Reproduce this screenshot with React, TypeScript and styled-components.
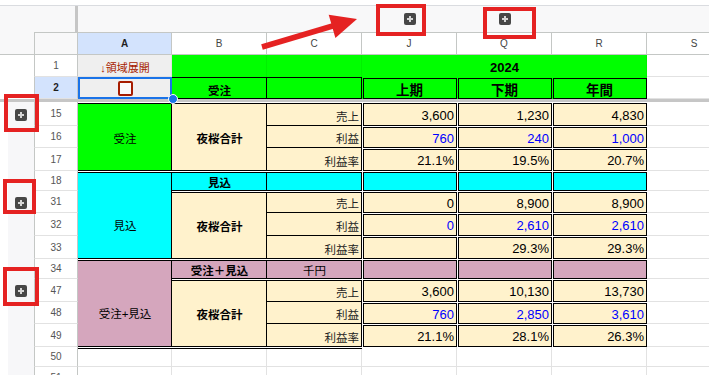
import React from "react";
import styled, { createGlobalStyle } from "styled-components";

const GREEN = "#00ff00";
const CYAN = "#00ffff";
const CREAM = "#fff2cc";
const MAUVE = "#d5a6bd";
const GRID = "#e2e2e2";
const HEAD_LINE = "#c4c7c5";
const RED = "#e52222";
const FONT = `"Liberation Sans", "Noto Sans CJK JP", sans-serif`;
const COLS = "34px 44px 94px 95px 95px 95px 95px 95px 95px";

const GlobalStyle = createGlobalStyle`
  *, *::before, *::after { box-sizing: border-box; }
  html, body { margin: 0; padding: 0; overflow: hidden; background: #fff; }
  body { font-family: ${FONT}; }
`;

type Top = "gap" | "line" | "none";

// black cell rules: right + bottom, optionally a top rule (double look with "gap")
const frame = (top: Top = "none", bottom = true) => {
  const s: string[] = [];
  if (top === "gap") s.push("inset 0 1px 0 #fff", "inset 0 2px 0 #000");
  if (top === "line") s.push("inset 0 1px 0 #000");
  s.push(bottom ? "inset -1px -1px 0 #000" : "inset -1px 0 0 #000");
  return s.join(", ");
};

const Page = styled.div`
  position: relative;
  width: 709px;
  height: 375px;
  overflow: hidden;
  padding-top: 5px;
  background: #fff;
`;

const ColumnGroups = styled.div`
  display: grid;
  grid-template-columns: ${COLS};
  height: 27px;
  border-top: 1px solid #dadce0;
  background: #f8f8f9;
`;

const GroupSlot = styled.div<{ $freeze?: boolean }>`
  display: flex;
  align-items: center;
  justify-content: center;
  ${(p) => p.$freeze && "border-right: 3px solid #c6c6c6;"}
`;

const GroupButton = styled.span`
  position: relative;
  display: block;
  width: 12px;
  height: 12px;
  border-radius: 2px;
  background: #474747;

  &::before,
  &::after {
    content: "";
    position: absolute;
    background: #d6d6d6;
  }
  &::before {
    left: 3px;
    top: 5px;
    width: 6px;
    height: 2px;
  }
  &::after {
    left: 5px;
    top: 3px;
    width: 2px;
    height: 6px;
  }
`;

const Sheet = styled.div`
  display: grid;
  grid-template-columns: ${COLS};
  grid-template-rows: 23px 22px 22px 3px 24px 22px 23px 20px 22px 23px 23px 20px 23px 22px 23px 20px 21px;
  font-family: ${FONT};
  color: #000;
`;

const Gutter = styled.div<{ $tone: "bar" | "plain" | "rail" }>`
  display: flex;
  align-items: center;
  justify-content: flex-end;
  padding: 1px 7px 0 0;
  background: ${(p) =>
    p.$tone === "bar"
      ? "#f8f8f9"
      : p.$tone === "rail"
      ? "linear-gradient(90deg, #fff 8px, #f7f7f9 8px)"
      : "#fff"};
  ${(p) => p.$tone === "bar" && `border-bottom: 1px solid ${HEAD_LINE};`}
`;

const Corner = styled.div`
  background: #f8f8f9;
  border: 1px solid ${HEAD_LINE};
`;

const ColHeader = styled.div<{ $active?: boolean }>`
  display: flex;
  align-items: center;
  justify-content: center;
  border-top: 1px solid ${HEAD_LINE};
  border-right: 1px solid ${HEAD_LINE};
  border-bottom: 1px solid ${HEAD_LINE};
  background: ${(p) => (p.$active ? "#d3e3fd" : "#fff")};
  color: ${(p) => (p.$active ? "#1f1f1f" : "#444")};
  font-weight: ${(p) => (p.$active ? 700 : 400)};
  font-size: 10px;
`;

const RowNum = styled.div<{ $active?: boolean }>`
  display: flex;
  align-items: center;
  justify-content: center;
  border-left: 1px solid ${HEAD_LINE};
  border-right: 1px solid ${HEAD_LINE};
  border-bottom: 1px solid ${GRID};
  background: ${(p) => (p.$active ? "#d3e3fd" : "#fff")};
  color: ${(p) => (p.$active ? "#1f1f1f" : "#555")};
  font-weight: ${(p) => (p.$active ? 700 : 400)};
  font-size: 10px;
`;

const ToggleLabel = styled.div`
  display: flex;
  align-items: center;
  justify-content: center;
  padding-top: 2px;
  background: #efefef;
  box-shadow: inset -1px -1px 0 ${GRID};
  color: #a61c00;
  font-size: 11px;
`;

const ToggleCell = styled.div`
  position: relative;
  z-index: 3;
  display: flex;
  align-items: center;
  justify-content: center;
  background: #efefef;
  box-shadow: inset 0 0 0 2px #1a73e8;
`;

const Checkbox = styled.span`
  width: 15px;
  height: 15px;
  border: 2px solid #a61c00;
  border-radius: 2px;
  background: #fafafa;
`;

const FillHandle = styled.span`
  position: absolute;
  right: -6px;
  bottom: -5px;
  width: 10px;
  height: 10px;
  border-radius: 50%;
  background: #1a73e8;
  border: 1px solid #fff;
`;

const HeadFill = styled.div<{ $span?: number }>`
  grid-column: span ${(p) => p.$span ?? 1};
  display: flex;
  align-items: center;
  justify-content: center;
  padding-top: 2px;
  background: ${GREEN};
  box-shadow: inset -1px 0 0 rgba(0, 0, 0, 0.06);
  font-size: 13px;
  font-weight: 700;
`;

const HeadLabel = styled.div`
  display: flex;
  align-items: center;
  justify-content: center;
  padding-top: 3px;
  background: ${GREEN};
  box-shadow: ${frame("line")};
  font-size: 11.5px;
  font-weight: 700;
`;

const FreezeBar = styled.div`
  grid-column: 1 / -1;
  background: #c6c6c6;
`;

const GroupCell = styled.div<{ $bg: string; $rows?: number; $top?: Top; $bottom?: boolean; $bold?: boolean }>`
  grid-row: span ${(p) => p.$rows ?? 1};
  display: flex;
  align-items: center;
  justify-content: center;
  padding-top: ${(p) => (p.$top === "gap" ? 2 : 0)}px;
  background: ${(p) => p.$bg};
  box-shadow: ${(p) => frame(p.$top, p.$bottom ?? true)};
  font-size: 11.5px;
  font-weight: ${(p) => (p.$bold ? 700 : 400)};
`;

const ItemLabel = styled.div<{ $top?: Top }>`
  display: flex;
  align-items: flex-end;
  justify-content: flex-end;
  padding: 0 3px 3px 0;
  background: ${CREAM};
  box-shadow: ${(p) => frame(p.$top)};
  font-size: 11.5px;
  line-height: 1;
  color: #222;
`;

const ValueBox = styled.div<{ $bg: string; $blue?: boolean; $gap?: string }>`
  display: flex;
  align-items: center;
  justify-content: flex-end;
  padding: 2px 3px 0 0;
  background: ${(p) => p.$bg};
  box-shadow: inset 1px 1px 0 ${(p) => p.$gap ?? "#fff"}, inset 2px 2px 0 #000, inset -1px -1px 0 #000;
  color: ${(p) => (p.$blue ? "#0000ff" : "#000")};
  font-size: 13px;
`;

const PeriodHead = styled(ValueBox)`
  justify-content: center;
  padding: 2px 0 0;
  font-size: 13.5px;
  font-weight: 700;
`;

const Blank = styled.div<{ $top?: Top }>`
  background: #fff;
  box-shadow: ${(p) => (p.$top === "gap" ? "inset 0 1px 0 #fff, inset 0 2px 0 #000, " : "")}inset -1px -1px 0 ${GRID};
`;

const Callout = styled.div<{ $x: number; $y: number; $w: number; $h: number }>`
  position: absolute;
  left: ${(p) => p.$x}px;
  top: ${(p) => p.$y}px;
  width: ${(p) => p.$w}px;
  height: ${(p) => p.$h}px;
  border: 4px solid ${RED};
  z-index: 6;
  pointer-events: none;
`;

const ArrowLayer = styled.svg`
  position: absolute;
  left: 0;
  top: 0;
  z-index: 6;
  pointer-events: none;
`;

type Metric = { label: string; values: string[]; blue?: boolean };
type Block = { rows: number[]; name: string; bg: string; first?: boolean; metrics: Metric[] };

const blocks: Block[] = [
  {
    rows: [15, 16, 17],
    name: "受注",
    bg: GREEN,
    first: true,
    metrics: [
      { label: "売上", values: ["3,600", "1,230", "4,830"] },
      { label: "利益", values: ["760", "240", "1,000"], blue: true },
      { label: "利益率", values: ["21.1%", "19.5%", "20.7%"] },
    ],
  },
  {
    rows: [31, 32, 33],
    name: "見込",
    bg: CYAN,
    metrics: [
      { label: "売上", values: ["0", "8,900", "8,900"] },
      { label: "利益", values: ["0", "2,610", "2,610"], blue: true },
      { label: "利益率", values: ["", "29.3%", "29.3%"] },
    ],
  },
  {
    rows: [47, 48, 49],
    name: "受注+見込",
    bg: MAUVE,
    metrics: [
      { label: "売上", values: ["3,600", "10,130", "13,730"] },
      { label: "利益", values: ["760", "2,850", "3,610"], blue: true },
      { label: "利益率", values: ["21.1%", "28.1%", "26.3%"] },
    ],
  },
];

function MetricBlock({ block }: { block: Block }) {
  return (
    <>
      {block.metrics.map((m, i) => (
        <React.Fragment key={m.label}>
          <Gutter $tone="rail">{i === 0 && <GroupButton />}</Gutter>
          <RowNum>{block.rows[i]}</RowNum>
          {i === 0 && (
            <>
              <GroupCell $bg={block.bg} $rows={3} $top={block.first ? "gap" : "none"}>
                {block.name}
              </GroupCell>
              <GroupCell $bg={CREAM} $rows={3} $top="gap" $bold>
                夜桜合計
              </GroupCell>
            </>
          )}
          <ItemLabel $top={i === 0 ? "gap" : "none"}>{m.label}</ItemLabel>
          {m.values.map((v, j) => (
            <ValueBox key={j} $bg={CREAM} $blue={m.blue}>
              {v}
            </ValueBox>
          ))}
          <Blank />
        </React.Fragment>
      ))}
    </>
  );
}

function BandRow({ row, bg, title, unit }: { row: number; bg: string; title: string; unit?: string }) {
  return (
    <>
      <Gutter $tone="rail" />
      <RowNum>{row}</RowNum>
      <GroupCell $bg={bg} $top="gap" $bottom={false} />
      <GroupCell $bg={bg} $top="gap" $bold>
        {title}
      </GroupCell>
      <GroupCell $bg={bg} $top="gap">
        {unit}
      </GroupCell>
      <ValueBox $bg={bg} />
      <ValueBox $bg={bg} />
      <ValueBox $bg={bg} />
      <Blank />
    </>
  );
}

function EmptyRow({ row, closing }: { row: number; closing?: boolean }) {
  return (
    <>
      <Gutter $tone="rail" />
      <RowNum>{row}</RowNum>
      <Blank $top={closing ? "gap" : "none"} />
      <Blank $top={closing ? "gap" : "none"} />
      <Blank $top={closing ? "gap" : "none"} />
      <Blank />
      <Blank />
      <Blank />
      <Blank />
    </>
  );
}

export default function App() {
  return (
    <Page>
      <GlobalStyle />

      <ColumnGroups>
        <GroupSlot />
        <GroupSlot $freeze />
        <GroupSlot />
        <GroupSlot />
        <GroupSlot />
        <GroupSlot>
          <GroupButton />
        </GroupSlot>
        <GroupSlot>
          <GroupButton />
        </GroupSlot>
        <GroupSlot />
        <GroupSlot />
      </ColumnGroups>

      <Sheet>
        <Gutter $tone="bar" />
        <Corner />
        <ColHeader $active>A</ColHeader>
        <ColHeader>B</ColHeader>
        <ColHeader>C</ColHeader>
        <ColHeader>J</ColHeader>
        <ColHeader>Q</ColHeader>
        <ColHeader>R</ColHeader>
        <ColHeader>S</ColHeader>

        <Gutter $tone="plain" />
        <RowNum>1</RowNum>
        <ToggleLabel>↓領域展開</ToggleLabel>
        <HeadFill />
        <HeadFill />
        <HeadFill $span={3}>2024</HeadFill>
        <Blank />

        <Gutter $tone="plain" />
        <RowNum $active>2</RowNum>
        <ToggleCell>
          <Checkbox />
          <FillHandle />
        </ToggleCell>
        <HeadLabel>受注</HeadLabel>
        <HeadLabel />
        <PeriodHead $bg={GREEN} $gap={GREEN}>上期</PeriodHead>
        <PeriodHead $bg={GREEN} $gap={GREEN}>下期</PeriodHead>
        <PeriodHead $bg={GREEN} $gap={GREEN}>年間</PeriodHead>
        <Blank />

        <FreezeBar />

        <MetricBlock block={blocks[0]} />
        <BandRow row={18} bg={CYAN} title="見込" />
        <MetricBlock block={blocks[1]} />
        <BandRow row={34} bg={MAUVE} title="受注＋見込" unit="千円" />
        <MetricBlock block={blocks[2]} />
        <EmptyRow row={50} closing />
        <EmptyRow row={51} />
      </Sheet>

      <Callout $x={376} $y={4} $w={50} $h={32} />
      <Callout $x={483} $y={7} $w={53} $h={32} />
      <Callout $x={4} $y={94} $w={35} $h={38} />
      <Callout $x={3} $y={179} $w={33} $h={35} />
      <Callout $x={3} $y={267} $w={36} $h={39} />

      <ArrowLayer width="709" height="375" viewBox="0 0 709 375">
        <line x1="262" y1="47" x2="336" y2="25" stroke={RED} strokeWidth="5.5" />
        <polygon points="357,19 328.7,14.8 335.4,37.9" fill={RED} />
      </ArrowLayer>
    </Page>
  );
}
